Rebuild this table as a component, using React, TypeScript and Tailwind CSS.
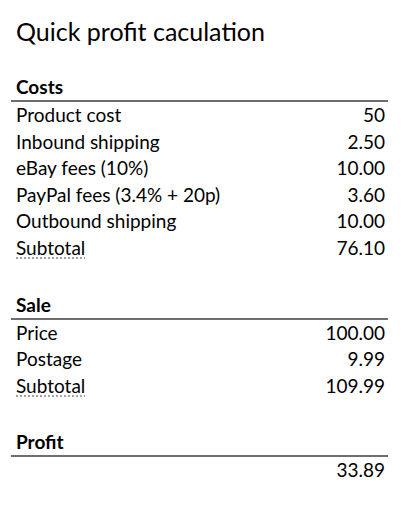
import React from 'react';

interface Row {
  label: string;
  value: string;
  subtotal?: boolean;
}

interface Section {
  title: string;
  rows: Row[];
}

const sections: Section[] = [
  {
    title: 'Costs',
    rows: [
      { label: 'Product cost', value: '50' },
      { label: 'Inbound shipping', value: '2.50' },
      { label: 'eBay fees (10%)', value: '10.00' },
      { label: 'PayPal fees (3.4% + 20p)', value: '3.60' },
      { label: 'Outbound shipping', value: '10.00' },
      { label: 'Subtotal', value: '76.10', subtotal: true },
    ],
  },
  {
    title: 'Sale',
    rows: [
      { label: 'Price', value: '100.00' },
      { label: 'Postage', value: '9.99' },
      { label: 'Subtotal', value: '109.99', subtotal: true },
    ],
  },
  {
    title: 'Profit',
    rows: [{ label: '', value: '33.89' }],
  },
];

const ProfitSection: React.FC<{ section: Section }> = ({ section }) => (
  <div className="mt-[30px] first:mt-0">
    <div className="border-b-2 border-[#6e6e6e] pl-[5px] font-bold leading-[26px]">
      {section.title}
    </div>
    {section.rows.map((row, i) => (
      <div key={i} className="flex justify-between pl-[5px] pr-[3px] leading-[26.6px]">
        <span
          className={
            row.subtotal
              ? 'underline decoration-dotted decoration-[#a0a0a0] underline-offset-[3px]'
              : ''
          }
        >
          {row.label}
        </span>
        <span>{row.value}</span>
      </div>
    ))}
  </div>
);

export default function App() {
  return (
    <div
      className="min-h-[506px] w-[409px] bg-white text-black"
      style={{ fontFamily: 'Lato, "Liberation Sans", sans-serif' }}
    >
      <h1 className="pl-[16px] pt-[18px] text-[25px] leading-[26px]">Quick profit caculation</h1>

      <div className="ml-[11px] mt-[30px] w-[377px] text-[19px]">
        {sections.map((s) => (
          <ProfitSection key={s.title} section={s} />
        ))}
      </div>
    </div>
  );
}
